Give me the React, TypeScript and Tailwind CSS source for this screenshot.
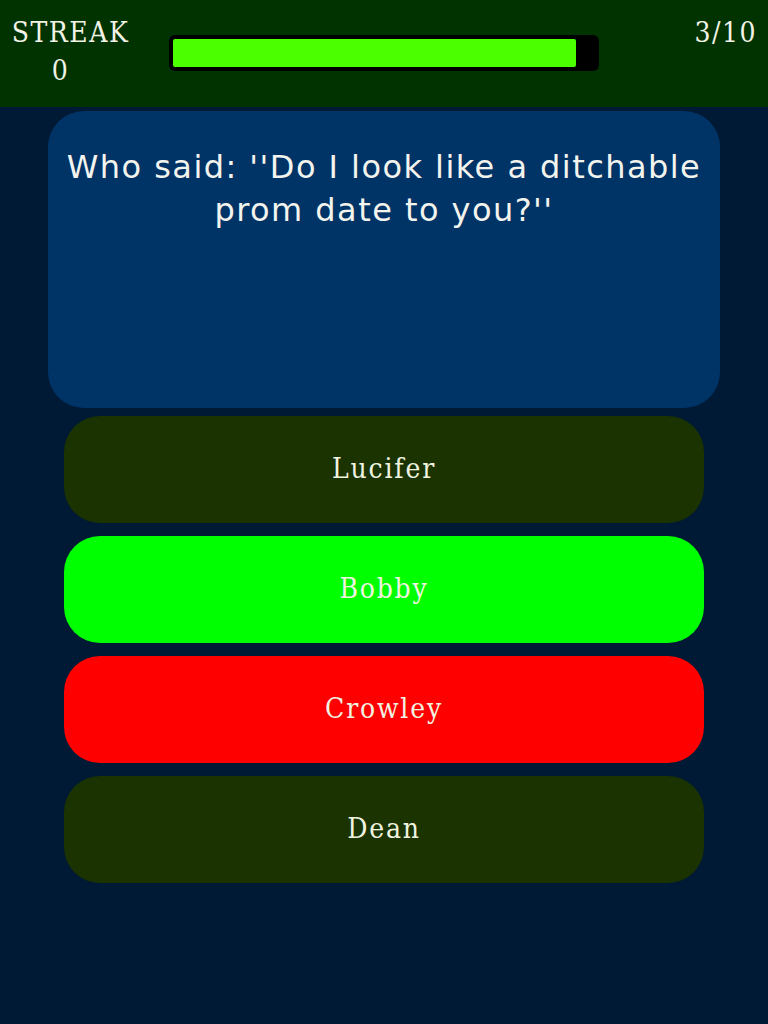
const answers = [
  { label: 'Lucifer', bg: 'bg-[#1a3300]' },
  { label: 'Bobby', bg: 'bg-[#00ff00]' },
  { label: 'Crowley', bg: 'bg-[#ff0000]' },
  { label: 'Dean', bg: 'bg-[#1a3300]' },
];

const serif = "font-['DejaVu_Serif_Condensed','Liberation_Serif',serif]";

export default function App() {
  const progress = 95.5;

  return (
    <div className="min-h-screen w-full bg-[#001a36] flex flex-col">
      <header className="h-[107px] bg-[#003300] flex items-start px-[11px] pt-[14px]">
        <div className={`${serif} flex flex-col items-center text-[28px] leading-[38px] text-[#f2f2e6] w-[119px] tracking-[1.5px]`}>
          <span>STREAK</span>
          <span className="mr-[20px]">0</span>
        </div>
        <div className="ml-[39px] mt-[21px] w-[430px] h-[36px] rounded-[6px] bg-black p-[4px]">
          <div className="h-full rounded-[2px] bg-[#4cff00]" style={{ width: `${progress}%` }} />
        </div>
        <div className={`${serif} ml-auto text-[28px] leading-[38px] text-[#f2f2e6] tracking-[1.5px]`}>3/10</div>
      </header>

      <main className="flex flex-col items-center pt-[4px]">
        <section className="w-[672px] h-[297px] rounded-[36px] bg-[#003366] px-2 pt-[35px]">
          <p className="font-['DejaVu_Sans',sans-serif] text-[32px] leading-[43px] text-center text-[#f4f4ee] tracking-[1.45px]">
            Who said: ''Do I look like a ditchable prom date to you?''
          </p>
        </section>

        <div className="w-[640px] flex flex-col gap-[13px] mt-[8px]">
          {answers.map((a) => (
            <button
              key={a.label}
              className={`${a.bg} ${serif} h-[107px] rounded-[36px] flex items-center justify-center pb-[2px] text-[28px] text-[#f0f3e0] tracking-[1.8px]`}
            >
              {a.label}
            </button>
          ))}
        </div>
      </main>
    </div>
  );
}
